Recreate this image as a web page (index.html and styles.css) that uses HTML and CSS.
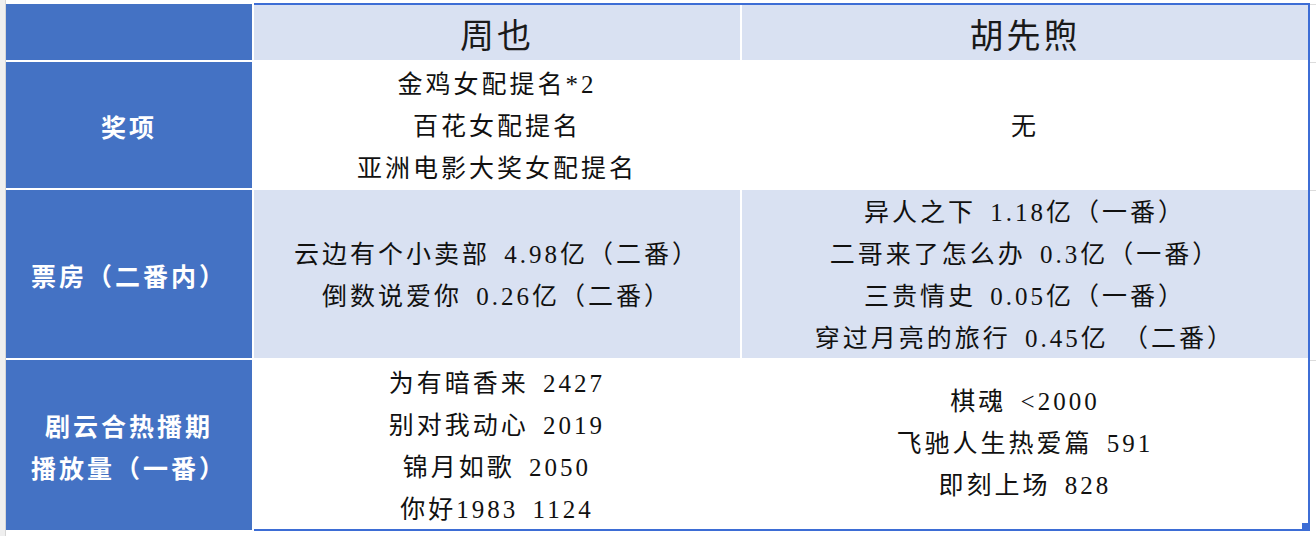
FILE: index.html
```html
<!DOCTYPE html>
<html lang="zh">
<head>
<meta charset="utf-8">
<title>周也 vs 胡先煦</title>
<link rel="stylesheet" href="styles.css">
</head>
<body>
<div class="sheet">
  <div class="row-strip"></div>
  <div class="table">
    <div class="lbl"></div>
    <div class="hd">周也</div>
    <div class="hd">胡先煦</div>

    <div class="lbl"><span>奖项</span></div>
    <div class="cell">
      <p>金鸡女配提名*2</p>
      <p>百花女配提名</p>
      <p>亚洲电影大奖女配提名</p>
    </div>
    <div class="cell">
      <p>无</p>
    </div>

    <div class="lbl"><span>票房（二番内）</span></div>
    <div class="cell tint">
      <p>云边有个小卖部 4.98亿（二番）</p>
      <p>倒数说爱你 0.26亿（二番）</p>
    </div>
    <div class="cell tint">
      <p>异人之下 1.18亿（一番）</p>
      <p>二哥来了怎么办 0.3亿（一番）</p>
      <p>三贵情史 0.05亿（一番）</p>
      <p>穿过月亮的旅行 0.45亿 （二番）</p>
    </div>

    <div class="lbl"><span>剧云合热播期<br>播放量（一番）</span></div>
    <div class="cell">
      <p>为有暗香来 2427</p>
      <p>别对我动心 2019</p>
      <p>锦月如歌 2050</p>
      <p>你好1983 1124</p>
    </div>
    <div class="cell raised">
      <p>棋魂 &lt;2000</p>
      <p>飞驰人生热爱篇 591</p>
      <p>即刻上场 828</p>
    </div>
  </div>
  <div class="col-strip">
    <div></div><div></div><div></div><div></div>
  </div>
  <div class="selection"><span class="handle"></span></div>
</div>
</body>
</html>
```

FILE: styles.css
```css
html, body {
  margin: 0;
  padding: 0;
  background: #ffffff;
}

.sheet {
  position: relative;
  display: flex;
  width: 1316px;
  height: 536px;
  overflow: hidden;
  background: #ffffff;
}

.row-strip {
  width: 5px;
  height: 536px;
  background: #efefef;
  border-right: 1px solid #d6d6d6;
  flex: none;
}

.table {
  margin-top: 4px;
  display: grid;
  grid-template-columns: 246px 486px 566px;
  grid-template-rows: 56px 126px 168px 170px;
  gap: 2px;
  background: #ffffff;
  flex: none;
  align-self: flex-start;
}

.lbl {
  background: #4472c4;
  color: #ffffff;
  display: flex;
  align-items: center;
  justify-content: center;
  text-align: center;
  font-family: "Noto Sans CJK SC", "Noto Sans", sans-serif;
  font-weight: 700;
  font-size: 25px;
  letter-spacing: 3px;
  line-height: 42px;
}

.lbl span {
  display: block;
  padding-top: 2px;
}

.hd {
  background: #d9e1f2;
  display: flex;
  align-items: center;
  justify-content: center;
  font-family: "Noto Sans CJK SC", sans-serif;
  font-weight: 400;
  font-size: 34px;
  letter-spacing: 3px;
  color: #1a1a1a;
  padding-top: 2px;
}

.cell {
  background: #ffffff;
  display: flex;
  flex-direction: column;
  align-items: center;
  justify-content: center;
  font-family: "Liberation Serif", "Noto Sans CJK SC", serif;
  font-size: 25px;
  letter-spacing: 3px;
  word-spacing: 5px;
  line-height: 42px;
  color: #111111;
  padding-top: 3px;
}

.cell p {
  margin: 0;
  white-space: nowrap;
}

.cell.tint {
  background: #d9e1f2;
}

.cell.raised {
  padding-top: 0;
  padding-bottom: 3px;
}

.col-strip {
  margin-top: 4px;
  flex: 1;
  display: grid;
  grid-template-rows: 56px 126px 168px 170px;
  gap: 2px;
  align-self: flex-start;
  margin-left: 2px;
}

.col-strip div {
  border-top: 1px solid #dcdcdc;
}

.selection {
  position: absolute;
  left: 254px;
  top: 3px;
  width: 1056px;
  height: 528px;
  box-sizing: border-box;
  border-top: 2px solid #3d6dd5;
  border-right: 2px solid #3d6dd5;
  border-bottom: 2px solid #3d6dd5;
  pointer-events: none;
}

.handle {
  position: absolute;
  right: -2px;
  bottom: -2px;
  width: 8px;
  height: 8px;
  background: #3d6dd5;
}
```
